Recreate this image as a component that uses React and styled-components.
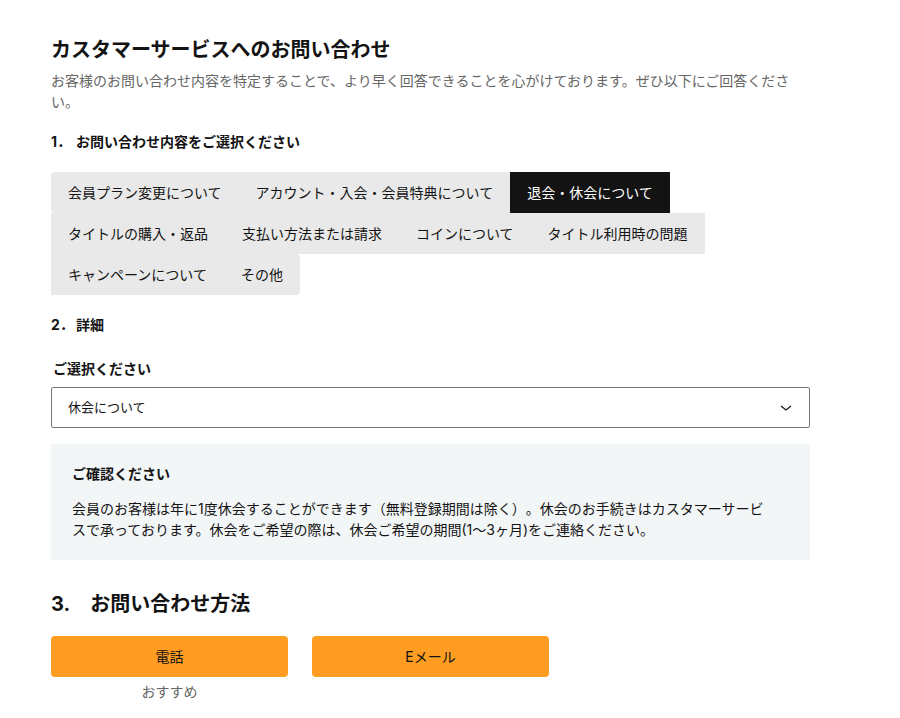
import React, { useState } from "react";
import styled, { createGlobalStyle } from "styled-components";

const GlobalStyle = createGlobalStyle`
  *, *::before, *::after { box-sizing: border-box; }
  body {
    margin: 0;
    background: #fff;
    color: #131313;
    font-family: Inter, "Noto Sans CJK JP", sans-serif;
    font-size: 14px;
    line-height: 20px;
    text-spacing-trim: space-all;
  }
  button, select { font: inherit; color: inherit; }
`;

const Page = styled.main`
  padding: 36px 90px 12px 51px;
`;

const Title = styled.h1`
  margin: 0;
  font-size: 20px;
  line-height: 28px;
  font-weight: 700;
`;

const Lead = styled.p`
  margin: 6px 0 0;
  color: #666;
  line-height: 21px;
`;

const StepHeading = styled.h2`
  display: grid;
  grid-template-columns: 25px 1fr;
  margin: 20px 0;
  font-size: 14px;
  line-height: 20px;
  font-weight: 700;
`;

const TopicGroup = styled.div`
  display: flex;
  flex-wrap: wrap;
  max-width: 660px;
`;

const Topic = styled.button`
  height: 41px;
  padding: 0 17px;
  border: 0;
  border-radius: ${(p) => p.$radius || "0"};
  background: ${(p) => (p.$active ? "#131313" : "#e9e9e9")};
  color: ${(p) => (p.$active ? "#fff" : "#131313")};
  white-space: nowrap;
  cursor: pointer;
`;

const FieldLabel = styled.label`
  display: block;
  margin: 24px 2px 8px;
  font-weight: 700;
`;

const SelectBox = styled.div`
  display: grid;
  align-items: center;
  & > * { grid-area: 1 / 1; }
`;

const Select = styled.select`
  width: 100%;
  height: 41px;
  padding: 0 40px 2px 16px;
  border: 1px solid #777;
  border-radius: 2px;
  background: #fff;
  font-size: 13px;
  appearance: none;
`;

const Chevron = styled.svg`
  justify-self: end;
  margin-right: 18px;
  pointer-events: none;
`;

const Notice = styled.section`
  margin-top: 16px;
  padding: 20px 40px 20px 21px;
  background: #f3f6f7;
`;

const NoticeTitle = styled.h3`
  margin: 0 0 14px;
  font-size: 14px;
  line-height: 20px;
`;

const NoticeText = styled.p`
  margin: 0;
  line-height: 21px;
`;

const MethodHeading = styled.h2`
  display: flex;
  gap: 20px;
  margin: 30px 0 18px;
  font-size: 20px;
  line-height: 28px;
`;

const Methods = styled.div`
  display: grid;
  grid-template-columns: repeat(auto-fit, 237px);
  gap: 24px;
`;

const Method = styled.div`
  text-align: center;
`;

const MethodButton = styled.button`
  display: block;
  width: 100%;
  height: 41px;
  border: 0;
  border-radius: 4px;
  background: #ff9d22;
  cursor: pointer;
`;

const Hint = styled.p`
  margin: 5px 0 0;
  color: #666;
`;

const topics = [
  { label: "会員プラン変更について", radius: "4px 0 0 4px" },
  { label: "アカウント・入会・会員特典について" },
  { label: "退会・休会について" },
  { label: "タイトルの購入・返品" },
  { label: "支払い方法または請求" },
  { label: "コインについて" },
  { label: "タイトル利用時の問題" },
  { label: "キャンペーンについて" },
  { label: "その他", radius: "0 4px 4px 0" },
];

export default function App() {
  const [topic, setTopic] = useState("退会・休会について");
  return (
    <Page lang="ja">
      <GlobalStyle />
      <Title>カスタマーサービスへのお問い合わせ</Title>
      <Lead>
        お客様のお問い合わせ内容を特定することで、より早く回答できることを心がけております。ぜひ以下にご回答ください。
      </Lead>

      <StepHeading>
        <span>1．</span>
        <span>お問い合わせ内容をご選択ください</span>
      </StepHeading>
      <TopicGroup>
        {topics.map(({ label, radius }) => (
          <Topic
            key={label}
            type="button"
            $radius={radius}
            $active={label === topic}
            aria-pressed={label === topic}
            onClick={() => setTopic(label)}
          >
            {label}
          </Topic>
        ))}
      </TopicGroup>

      <StepHeading>
        <span>2．</span>
        <span>詳細</span>
      </StepHeading>
      <FieldLabel htmlFor="detail">ご選択ください</FieldLabel>
      <SelectBox>
        <Select id="detail">
          <option>休会について</option>
        </Select>
        <Chevron width="12" height="6" viewBox="0 0 12 6" fill="none" stroke="#131313" strokeWidth="1.2" aria-hidden="true">
          <path d="M1 1 6 5l5-4" />
        </Chevron>
      </SelectBox>

      <Notice>
        <NoticeTitle>ご確認ください</NoticeTitle>
        <NoticeText>
          会員のお客様は年に1度休会することができます（無料登録期間は除く）。休会のお手続きはカスタマーサービスで承っております。休会をご希望の際は、休会ご希望の期間(1〜3ヶ月)をご連絡ください。
        </NoticeText>
      </Notice>

      <MethodHeading>
        <span>3.</span>
        <span>お問い合わせ方法</span>
      </MethodHeading>
      <Methods>
        <Method>
          <MethodButton type="button">電話</MethodButton>
          <Hint>おすすめ</Hint>
        </Method>
        <Method>
          <MethodButton type="button">Eメール</MethodButton>
        </Method>
      </Methods>
    </Page>
  );
}
